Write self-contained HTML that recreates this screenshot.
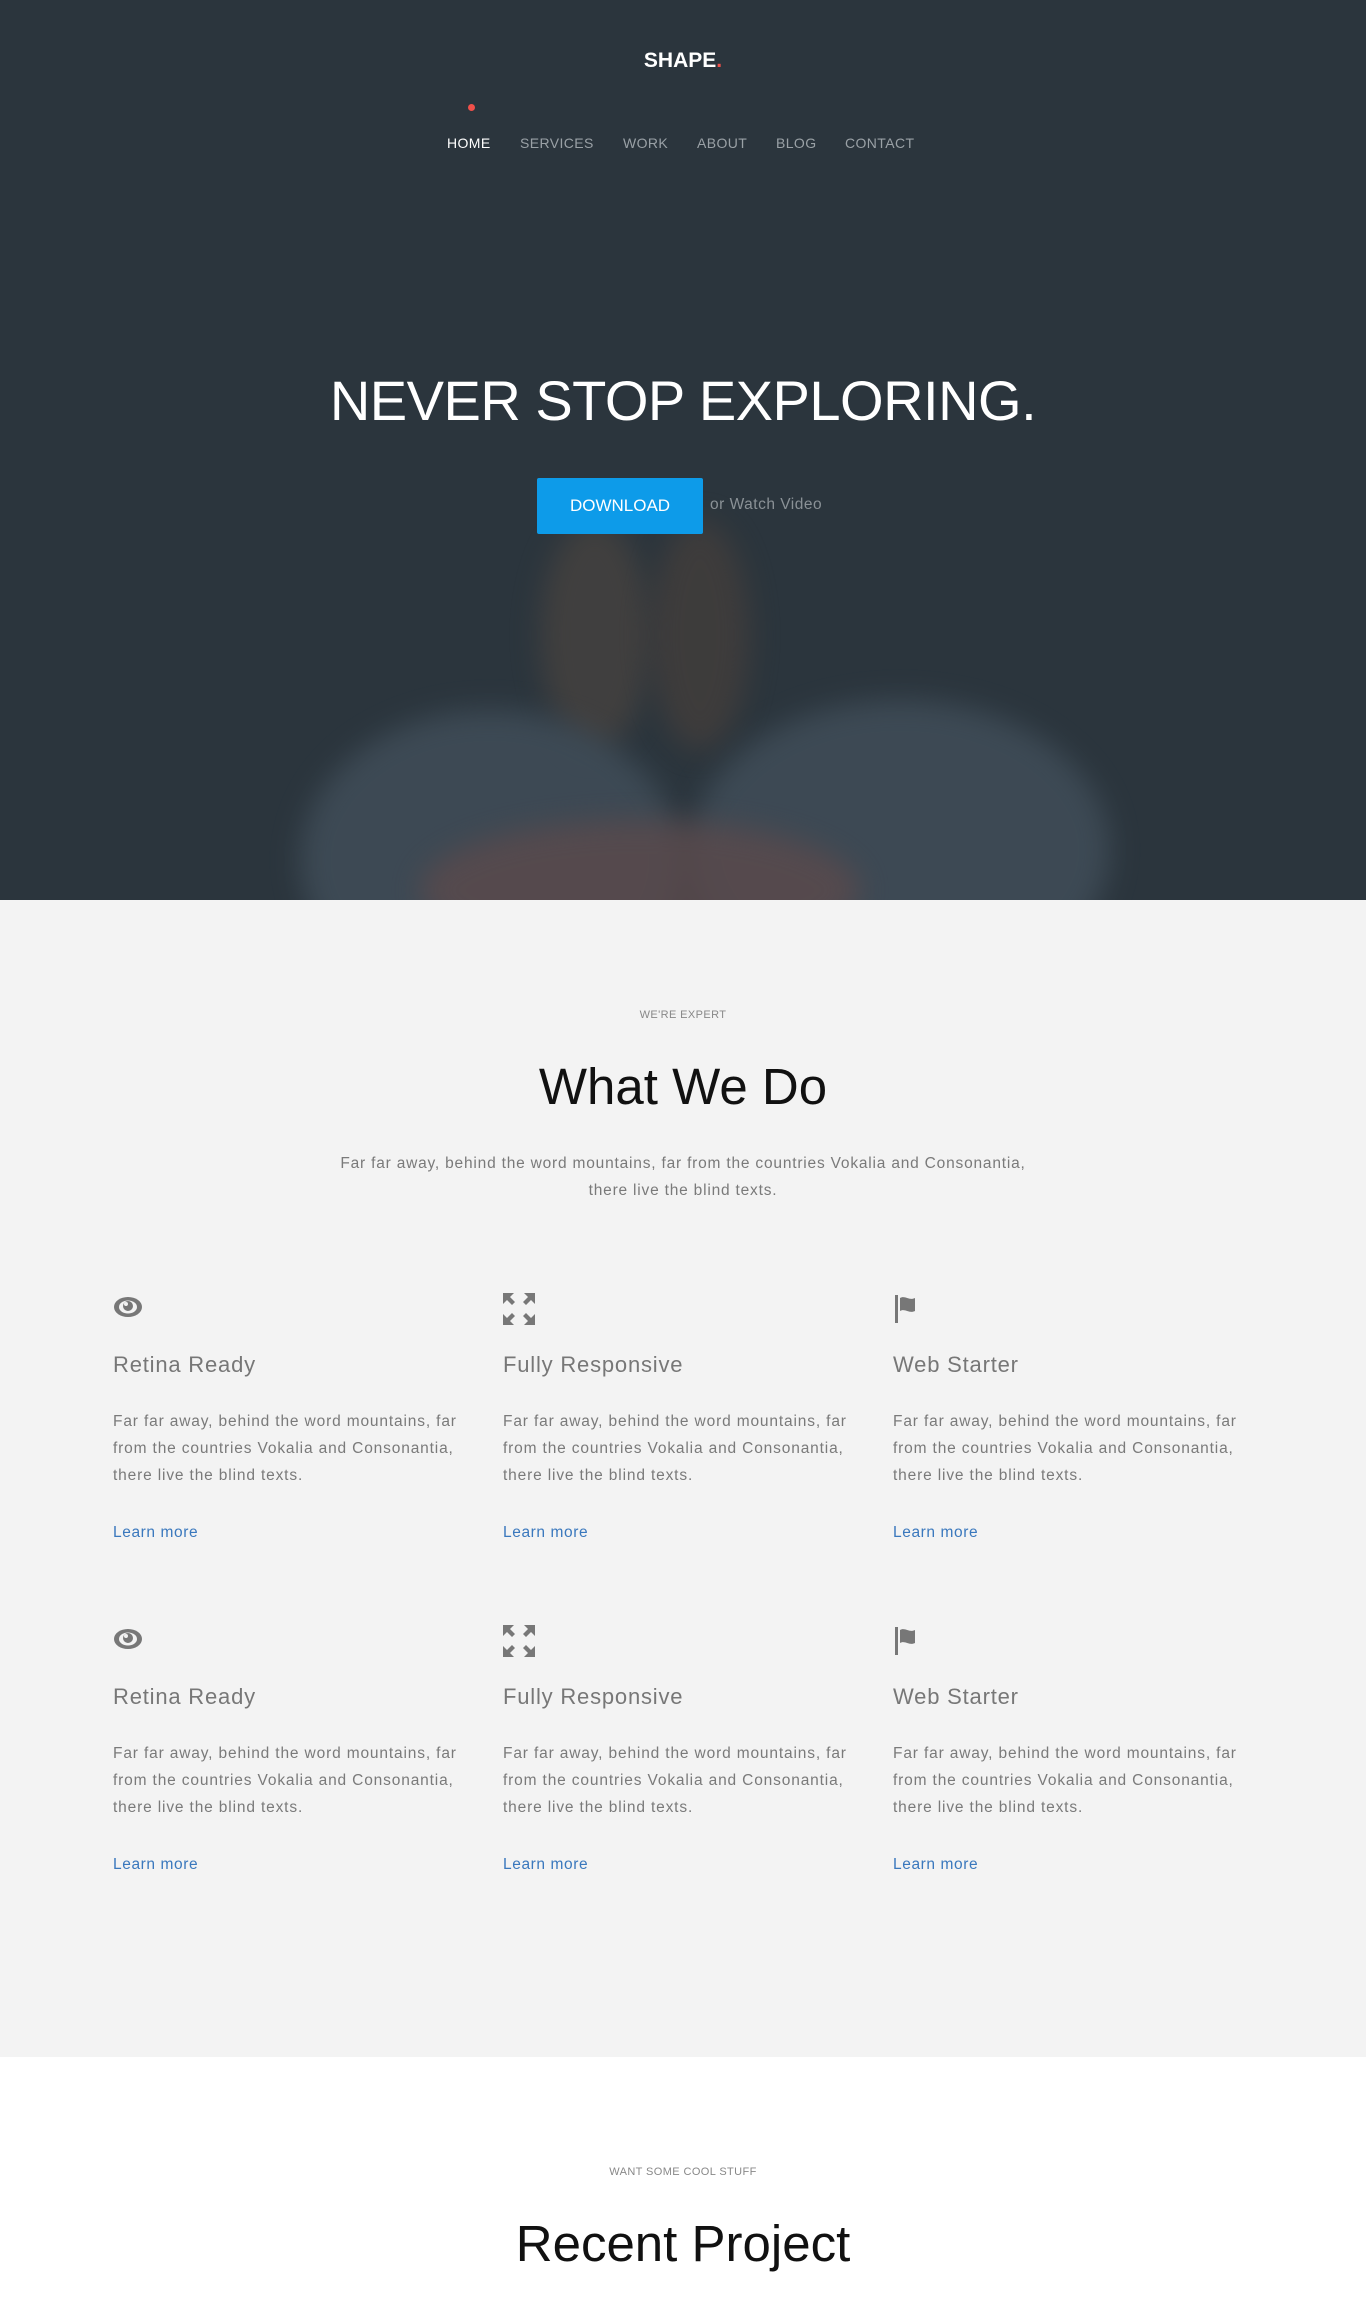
<!DOCTYPE html>
<html><head><meta charset="utf-8"><style>
*{margin:0;padding:0;box-sizing:border-box}
body{width:1366px;height:2300px;font-family:"Liberation Sans",sans-serif;background:#fff;overflow:hidden;position:relative}
.hero{position:absolute;left:0;top:0;width:1366px;height:900px;background:#2b353d;overflow:hidden}
.blob{position:absolute;border-radius:50%;filter:blur(14px)}
.logo{position:absolute;top:49px;width:100%;text-align:center;color:#fff;font-weight:bold;font-size:21px}
.logo span{color:#f0504a}
.dot{position:absolute;left:468px;top:104px;width:7px;height:7px;border-radius:50%;background:#f0504a}
.nav{position:absolute;top:135px;left:0;width:100%;font-size:14px;color:#9aa1a6;letter-spacing:.4px}
.nav a{position:absolute}
h1{position:absolute;top:368px;width:100%;text-align:center;color:#fff;font-weight:normal;font-size:56px;letter-spacing:-.5px}
.btn{position:absolute;left:537px;top:478px;width:166px;height:56px;background:#0d9be9;border-radius:2px;color:#fff;font-size:17px;text-align:center;line-height:56px}
.watch{position:absolute;left:710px;top:496px;color:#8a9196;font-size:15.5px;letter-spacing:.5px}
.sec{position:absolute;left:0;top:900px;width:1366px;height:1157px;background:#f3f3f3}
.small{position:absolute;width:100%;text-align:center;font-size:11px;color:#888;letter-spacing:.4px}
.big{position:absolute;width:100%;text-align:center;font-size:51px;color:#111;font-weight:normal}
.lead{position:absolute;top:250px;width:100%;text-align:center;font-size:15.5px;line-height:27px;color:#7a7a7a;letter-spacing:.8px}
.card{position:absolute;width:370px}
.card svg{position:absolute;left:0;top:0}
.card h3{position:absolute;top:59px;left:0;font-weight:normal;font-size:22px;color:#777;letter-spacing:.8px;white-space:nowrap}
.card p{position:absolute;top:115px;left:0;width:370px;font-size:15.5px;line-height:27px;color:#7a7a7a;letter-spacing:.85px}
.card a{position:absolute;top:231px;left:0;font-size:15.5px;color:#3a78bd;letter-spacing:.6px}
</style></head><body>
<div class="hero">
 <div class="blob" style="left:540px;top:520px;width:110px;height:230px;background:#4a4440;opacity:.7"></div>
 <div class="blob" style="left:650px;top:520px;width:100px;height:230px;background:#463f3b;opacity:.7"></div>
 <div class="blob" style="left:300px;top:710px;width:380px;height:300px;background:#3f4c57;opacity:.9"></div>
 <div class="blob" style="left:690px;top:700px;width:420px;height:300px;background:#3f4c57;opacity:.9"></div>
 <div class="blob" style="left:420px;top:820px;width:440px;height:140px;background:#5b4a4c;opacity:.8"></div>
 <div class="logo">SHAPE<span>.</span></div>
 <div class="dot"></div>
 <div class="nav"><a style="left:447px;color:#fff">HOME</a><a style="left:520px">SERVICES</a><a style="left:623px">WORK</a><a style="left:697px">ABOUT</a><a style="left:776px">BLOG</a><a style="left:845px">CONTACT</a></div>
 <h1>NEVER STOP EXPLORING.</h1>
 <div class="btn">DOWNLOAD</div>
 <div class="watch">or Watch Video</div>
</div>
<div class="sec">
 <div class="small" style="top:109px">WE'RE EXPERT</div>
 <div class="big" style="top:157px">What We Do</div>
 <div class="lead">Far far away, behind the word mountains, far from the countries Vokalia and Consonantia,<br>there live the blind texts.</div>
</div>
<div class="small" style="top:2166px">WANT SOME COOL STUFF</div>
<div class="big" style="top:2214px">Recent Project</div>
<div class="card" style="left:113px;top:1293px"><svg width="30" height="28" viewBox="0 0 30 28"><ellipse cx="15" cy="14" rx="14" ry="10" fill="#777"/><ellipse cx="15" cy="14" rx="9" ry="6.5" fill="#f3f3f3"/><circle cx="15" cy="13" r="5" fill="#777"/><circle cx="13" cy="11" r="2" fill="#f3f3f3"/></svg><h3>Retina Ready</h3><p>Far far away, behind the word mountains, far from the countries Vokalia and Consonantia, there live the blind texts.</p><a>Learn more</a></div>
<div class="card" style="left:503px;top:1293px"><svg width="32" height="32" viewBox="0 0 32 32" fill="#777"><path d="M0 0h11l-4 4 5 5-3 3-5-5-4 4zM32 0v11l-4-4-5 5-3-3 5-5-4-4zM0 32V21l4 4 5-5 3 3-5 5 4 4zM32 32H21l4-4-5-5 3-3 5 5 4-4z"/></svg><h3>Fully Responsive</h3><p>Far far away, behind the word mountains, far from the countries Vokalia and Consonantia, there live the blind texts.</p><a>Learn more</a></div>
<div class="card" style="left:893px;top:1293px"><svg width="30" height="32" viewBox="0 0 30 32" fill="#777"><rect x="2" y="2" width="3" height="28"/><path d="M7 5c5-3 9 3 15 0v13c-6 3-10-3-15 0z"/></svg><h3>Web Starter</h3><p>Far far away, behind the word mountains, far from the countries Vokalia and Consonantia, there live the blind texts.</p><a>Learn more</a></div>
<div class="card" style="left:113px;top:1625px"><svg width="30" height="28" viewBox="0 0 30 28"><ellipse cx="15" cy="14" rx="14" ry="10" fill="#777"/><ellipse cx="15" cy="14" rx="9" ry="6.5" fill="#f3f3f3"/><circle cx="15" cy="13" r="5" fill="#777"/><circle cx="13" cy="11" r="2" fill="#f3f3f3"/></svg><h3>Retina Ready</h3><p>Far far away, behind the word mountains, far from the countries Vokalia and Consonantia, there live the blind texts.</p><a>Learn more</a></div>
<div class="card" style="left:503px;top:1625px"><svg width="32" height="32" viewBox="0 0 32 32" fill="#777"><path d="M0 0h11l-4 4 5 5-3 3-5-5-4 4zM32 0v11l-4-4-5 5-3-3 5-5-4-4zM0 32V21l4 4 5-5 3 3-5 5 4 4zM32 32H21l4-4-5-5 3-3 5 5 4-4z"/></svg><h3>Fully Responsive</h3><p>Far far away, behind the word mountains, far from the countries Vokalia and Consonantia, there live the blind texts.</p><a>Learn more</a></div>
<div class="card" style="left:893px;top:1625px"><svg width="30" height="32" viewBox="0 0 30 32" fill="#777"><rect x="2" y="2" width="3" height="28"/><path d="M7 5c5-3 9 3 15 0v13c-6 3-10-3-15 0z"/></svg><h3>Web Starter</h3><p>Far far away, behind the word mountains, far from the countries Vokalia and Consonantia, there live the blind texts.</p><a>Learn more</a></div>
</body></html>
